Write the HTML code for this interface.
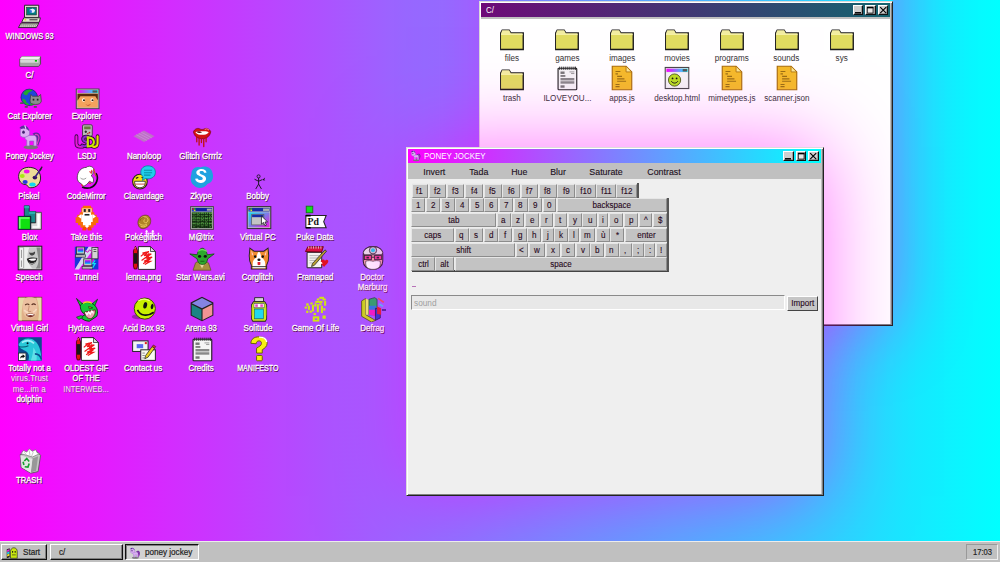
<!DOCTYPE html>
<html><head><meta charset="utf-8"><title>WINDOWS 93</title>
<style>
*{box-sizing:border-box;margin:0;padding:0}
html,body{width:1000px;height:562px;overflow:hidden}
body{font-family:"Liberation Sans",sans-serif;font-size:9px;position:relative;background:linear-gradient(90deg,#ff00ff 0%,#00ffff 100%);color:#222}
.dl{position:absolute;width:120px;height:11px;text-align:center;color:#fff;font-size:8.9px;line-height:11px;white-space:nowrap;text-shadow:.9px .9px 0 #505,.5px .5px .6px #636;-webkit-text-stroke:.3px #fff}
.dl span,.fl span,.k span,.mi span{display:inline-block}
.dl.fd{color:#f4dcf8;text-shadow:.8px .8px 0 #858;-webkit-text-stroke:0}
.fl{position:absolute;width:80px;height:11px;text-align:center;color:#333;font-size:8.9px;line-height:11px;white-space:nowrap}
.fl span{transform:scaleX(.91)}
.win{position:absolute;background:#c0c0c0}
.tb{position:absolute;color:#fff}
.tb .t{position:absolute;top:2px;font-size:9px;line-height:10px;transform:scaleX(.88);transform-origin:0 50%;white-space:nowrap}
.btn{position:absolute;width:10.5px;height:10.6px;background:#cfcfcf;border:1px solid;border-color:#fff #111 #111 #fff;box-shadow:inset -.7px -.7px 0 #888}
.btn svg{position:absolute;left:0;top:0;width:8.5px;height:8.6px}
.k{position:absolute;background:#c3c3c3;border:1px solid;border-color:#e6e6e6 #8c8c8c #8c8c8c #e6e6e6;text-align:center;font-size:8.3px;line-height:12.6px;color:#2a0a22;-webkit-text-stroke:.12px #2a0a22;white-space:nowrap;overflow:hidden}
.k span{transform:scaleX(.97)}
.mi{position:absolute;top:164px;height:16px;line-height:17px;text-align:center;font-size:9px;color:#201020;-webkit-text-stroke:.12px #201020;white-space:nowrap}
.mi span{transform:scaleX(.98)}
#bar{position:absolute;left:0;top:541px;width:1000px;height:21px;background:#c0c0c0;border-top:1px solid #ececec}
.tk{position:absolute;top:2px;height:16.4px;background:#c0c0c0;border:1px solid;border-color:#fff #111 #111 #fff;box-shadow:inset -1px -1px 0 #808080;font-size:9px;color:#222}
.tk.on{border-color:#111 #fff #fff #111;box-shadow:inset 1px 1px 0 #808080;background:#d2d2d2}
.tk i{position:absolute;top:2px;line-height:11px;font-style:normal;-webkit-text-stroke:.2px #222;transform:scaleX(.9);transform-origin:0 50%;white-space:nowrap}
</style></head><body>
<svg style="position:absolute;left:16.9px;top:3.9px" width="26" height="26" viewBox="0 0 32 32"><g transform="translate(.3,-1)">
<path d="M9 2.5h17.5v15H9z" fill="#e6e6da" stroke="#222" stroke-width="1.2"/>
<rect x="11.5" y="5" width="12" height="9.5" fill="#007c80" stroke="#333" stroke-width=".8"/>
<path d="M15 8l4-1.5 3 2-1 3-4 .5z" fill="#e8f0ff"/><path d="M15 8l3 1v3l-3-1z" fill="#3070e0"/>
<path d="M8 18h20.5l-1.5 5.5H5.5z" fill="#e2e2d4" stroke="#222" stroke-width="1.1"/>
<rect x="9" y="19.6" width="2" height="1.6" fill="#e0e000"/><rect x="15" y="19.8" width="10" height="1.3" fill="#333"/>
<path d="M4.5 24.5h22l-3 5.5H1.500z" fill="#d6d6c8" stroke="#222" stroke-width="1.1"/>
<path d="M5 26h19M4 28h19" stroke="#555" stroke-width="1" stroke-dasharray="1.5 1"/>
</g></svg>
<div class="dl" style="left:-30.8px;top:30.7px"><span style="transform:scaleX(0.84)">WINDOWS 93</span></div>
<svg style="position:absolute;left:16.9px;top:43.5px" width="26" height="26" viewBox="0 0 32 32"><path d="M3.5 18.500l2.5-3h23v9L26.5 27.500H3.500z" fill="#aaa" stroke="#444" stroke-width="1.1"/>
<path d="M3.5 18.500l2.5-3h23L26.5 18.500z" fill="#f0f0f0"/>
<path d="M4 19h22.500v4H4z" fill="#d6d6d6"/>
<path d="M4 23.500h22.500v3.500H4z" fill="#a4a4a4"/>
<rect x="22" y="19.7" width="2.6" height="2" fill="#0b0"/></svg>
<div class="dl" style="left:-30.8px;top:70.3px"><span style="transform:scaleX(0.9)">C/</span></div>
<svg style="position:absolute;left:16.9px;top:84.1px" width="26" height="26" viewBox="0 0 32 32"><g transform="translate(3,3.2) scale(.93,.88)">
<ellipse cx="13" cy="15" rx="11" ry="11.5" fill="#2046d8" stroke="#124" stroke-width=".8"/>
<path d="M5 9c3-5 9-6 12-4-2 3-5 2-6 5s-4 3-6-1zM4 17c3 0 5 2 5 5 2 1 5 3 3 4-4 0-8-4-8-9zM15 21c3-1 5 1 6 3-2 2-5 3-7 2z" fill="#22a82c"/>
<path d="M15 11l2.5 2.500h8L28 11l1 9c0 3-3 5-7.5 5S14 23 14 20z" fill="#8c8c8c" stroke="#333" stroke-width=".9"/>
<rect x="17.5" y="17" width="2.2" height="2.5" fill="#222"/><rect x="23" y="17" width="2.2" height="2.5" fill="#222"/>
<path d="M1 22h4v2.500H1zM7 27h4v2.500H7zM19 27h4v2.500h-4z" fill="#555"/>
</g></svg>
<div class="dl" style="left:-30.8px;top:110.9px"><span style="transform:scaleX(0.9)">Cat Explorer</span></div>
<svg style="position:absolute;left:16.9px;top:124.2px" width="26" height="26" viewBox="0 0 32 32"><ellipse cx="17" cy="28.5" rx="9" ry="2.6" fill="#777"/>
<path d="M19 12c4-3 9-2 10 3 1 4-2 8-3 12-2-2-1-6-2-9-1-3-3-4-5-6z" fill="#5a2c9c"/>
<path d="M22 13c3-1 5 1 5 4s-2 5-2 8" stroke="#e040c0" stroke-width="1.4" fill="none"/>
<path d="M10 14h11c2 0 3 2 3 4v9h-3.500v-6h-5v6H12v-7c-2-1-3-3-2-6z" fill="#dcaef4" stroke="#9060c0" stroke-width=".8"/>
<path d="M4 8c1-4 6-5 9-3s3 6 2 9l-4 2c-3 1-6 0-7-2z" fill="#dcaef4" stroke="#9060c0" stroke-width=".8"/>
<path d="M8 1l2 5M3 5c2-3 6-4 9-2 2 1 3 4 3 6-2-3-6-4-9-3z" fill="#5a2c9c"/>
<path d="M9.5 1.500l1.5 4.5" stroke="#f0d0ff" stroke-width="1.4"/>
<ellipse cx="8" cy="10" rx="1.6" ry="2" fill="#402070"/></svg>
<div class="dl" style="left:-30.8px;top:151.0px"><span style="transform:scaleX(0.87)">Poney Jockey</span></div>
<svg style="position:absolute;left:16.9px;top:164.6px" width="26" height="26" viewBox="0 0 32 32"><path d="M2 14C2 6 9 2 17 3s12 6 12 13-5 12-12 12c-5 0-3-4-7-4S2 20 2 14z" fill="#ecdc98" stroke="#222" stroke-width="1.2"/>
<ellipse cx="12" cy="8" rx="3.5" ry="2.4" fill="#f010f0"/>
<ellipse cx="6.5" cy="13.5" rx="3" ry="2.4" fill="#a8e810"/>
<ellipse cx="10" cy="21" rx="3.2" ry="2.5" fill="#2838e0"/>
<ellipse cx="19" cy="24" rx="4" ry="2.6" fill="#10d8f0"/>
<ellipse cx="22" cy="15.5" rx="2.8" ry="2.3" fill="#301060"/>
<path d="M22 15L30 4" stroke="#3a2080" stroke-width="2"/><path d="M28 7l3-5" stroke="#222" stroke-width="1.5"/></svg>
<div class="dl" style="left:-30.8px;top:191.4px"><span style="transform:scaleX(0.9)">Piskel</span></div>
<svg style="position:absolute;left:16.9px;top:204.8px" width="26" height="26" viewBox="0 0 32 32"><path d="M9 1h6v7h8v14h-6v-8h-8z" fill="#1a8a8a" stroke="#123" stroke-width="1"/>
<path d="M9 1h6v7h8v3h-8V4H9z" fill="#2ab0b0"/>
<path d="M23 9h7v21H17v-8h6z" fill="#d8d8d8" stroke="#333" stroke-width="1"/>
<path d="M25 11h3v17h-9v-2h6z" fill="#fff"/>
<rect x="1.5" y="14" width="15" height="16" fill="#10e010" stroke="#123" stroke-width="1.2"/>
<path d="M2.5 15h13v2h-11v12h-2z" fill="#70ff70"/></svg>
<div class="dl" style="left:-30.8px;top:231.6px"><span style="transform:scaleX(0.9)">Blox</span></div>
<svg style="position:absolute;left:16.9px;top:245.1px" width="26" height="26" viewBox="0 0 32 32"><rect x="1.5" y="1.5" width="29" height="29" fill="#d8d8d8" stroke="#222" stroke-width="1.3"/>
<rect x="3" y="3" width="5" height="26" fill="#f0f0f0" stroke="#888" stroke-width=".6"/>
<path d="M5.5 6v10M5.5 19v8" stroke="#999" stroke-width="1.2"/>
<rect x="9" y="3" width="20" height="26" fill="#c8c8c8"/>
<path d="M9 3h6c-2 6-3 12-1 18 1 4 3 6 5 8H9z" fill="#eee"/>
<path d="M24 3h5v26h-6c3-4 4-8 3-14z" fill="#888"/>
<path d="M15 9c2 1 5 1 7-1 1 2-1 5-3.5 5S15 11 15 9z" fill="#444"/>
<path d="M12 17c4-2 9-2 13-1-1 5-4 8-7 8s-5-3-6-7z" fill="#222"/>
<path d="M14 17.500c3-1 7-1 10-.500-1 2-3 2.5-5 2.500s-4-1-5-2z" fill="#fff"/>
<path d="M15 22c2 1.5 5 1.5 7-.500" stroke="#aaa" stroke-width="1.2" fill="none"/></svg>
<div class="dl" style="left:-30.8px;top:271.9px"><span style="transform:scaleX(0.9)">Speech</span></div>
<svg style="position:absolute;left:16.9px;top:295.7px" width="26" height="26" viewBox="0 0 32 32"><rect x="1.5" y="1.5" width="29" height="29" fill="#e0b088" stroke="#6a4a30" stroke-width="1"/>
<path d="M2 2h8c-3 6-5 14-4 28H2zM24 2h6v28h-4c2-10 1-20-2-28z" fill="#e8d8a8"/>
<path d="M9 3c4-2 10-2 14 0 3 6 3 16-1 22-3 3-9 3-12 0C6 19 6 9 9 3z" fill="#ecc0a0"/>
<path d="M10 11c2-1.5 4-1.5 5 0M18 11c1.5-1.5 3.5-1.5 5 0" stroke="#5a3020" stroke-width="1.4" fill="none"/>
<path d="M15 12c-.5 3-1 5-1.5 7h4" stroke="#c08868" stroke-width="1" fill="none"/>
<path d="M11 23c3-2 8-2 11 0-2 4-9 4-11 0z" fill="#7a3028"/>
<path d="M12.5 23.500c2.5-1 6-1 8 0" stroke="#fff" stroke-width="1.3" fill="none"/>
<path d="M9 17c1 2 3 3 5 3M24 16c-1 2-2 3-4 4" stroke="#f8d8c0" stroke-width="2" fill="none"/></svg>
<div class="dl" style="left:-30.8px;top:322.5px"><span style="transform:scaleX(0.9)">Virtual Girl</span></div>
<svg style="position:absolute;left:16.9px;top:336.2px" width="26" height="26" viewBox="0 0 32 32"><rect x="1.5" y="1.5" width="29" height="29" fill="#0c4c90"/>
<path d="M2 10C6 3 16 1 22 6c5 4 8 12 8 24H14c2-6 0-10-4-12s-7-3-8-8z" fill="#28c8d8"/>
<path d="M6 8c5-3 11-3 15 1" stroke="#a0f0f8" stroke-width="2" fill="none"/>
<path d="M2 13c4 1 8 1 12-1" stroke="#0a5870" stroke-width="1.3" fill="none"/>
<circle cx="13" cy="9" r="1.2" fill="#012"/>
<path d="M20 14c3 3 5 9 4 16h-7c2-5 3-11 3-16z" fill="#60e0e8"/>
<path d="M22 22c4 0 7 3 8 7" stroke="#0c4c90" stroke-width="2" fill="none"/>
<rect x="2" y="21" width="9" height="9" fill="#fff" stroke="#222" stroke-width=".9"/>
<path d="M4 28c0-3 1-4 3-4v-1.500l3 2.5-3 2.500V26c-1 0-2 .5-3 2z" fill="#111"/></svg>
<div class="dl" style="left:-30.8px;top:363.0px"><span style="transform:scaleX(0.9)">Totally not a</span></div>
<div class="dl fd" style="left:-30.8px;top:373.4px"><span style="transform:scaleX(0.9)">virus.Trust</span></div>
<div class="dl fd" style="left:-30.8px;top:383.8px"><span style="transform:scaleX(0.9)">me...im a</span></div>
<div class="dl" style="left:-30.8px;top:394.2px"><span style="transform:scaleX(0.9)">dolphin</span></div>
<svg style="position:absolute;left:16.9px;top:447.8px" width="26" height="26" viewBox="0 0 32 32"><path d="M4 8l20-4 5 5-3 20-9 2L5 24z" fill="#c4c4c4" stroke="#555" stroke-width="1"/>
<path d="M19 13l7-3-2.5 18-7 2z" fill="#989898"/>
<path d="M4 9l15 4.5-2 17L6 24z" fill="#e4e4e4"/>
<path d="M5 7l3-4 4 2 3-4 4 3 4-2 2 4 3 1-9 4z" fill="#fff" stroke="#777" stroke-width=".9"/>
<path d="M9 5l3 4M15 3l1 6M20 5l-2 5" stroke="#bbb" stroke-width="1"/>
<path d="M9 16l3-3 3 3.500M15 19l-1.5 4.5-4-.5M8.5 21l-1-4" stroke="#18a030" stroke-width="2" fill="none"/></svg>
<div class="dl" style="left:-30.8px;top:474.6px"><span style="transform:scaleX(0.86)">TRASH</span></div>
<svg style="position:absolute;left:74.1px;top:84.1px" width="26" height="26" viewBox="0 0 32 32"><g transform="translate(.8,4.3) scale(1,.9)">
<rect x="2" y="2" width="28" height="27" fill="#c0c0c0" stroke="#444" stroke-width="1.2"/>
<defs><linearGradient id="gmc"><stop offset="0" stop-color="#f0f"/><stop offset="1" stop-color="#0ff"/></linearGradient></defs>
<rect x="3.5" y="3.5" width="25" height="4" fill="url(#gmc)"/>
<rect x="22" y="4" width="6" height="3" fill="#555"/>
<rect x="3.5" y="8.5" width="25" height="19" fill="#f4a25c"/>
<path d="M3.5 8.500h25v9l-3-5.500H7l-3.5 6z" fill="#5a2a0e"/>
<ellipse cx="11" cy="17" rx="2" ry="2.4" fill="#fff"/><ellipse cx="21.5" cy="17" rx="2" ry="2.4" fill="#fff"/>
<circle cx="11.5" cy="17.3" r="1.3" fill="#321"/><circle cx="22" cy="17.3" r="1.3" fill="#321"/>
<path d="M13 22.500q3 3 7 0q-3 4.5-7 0z" fill="#a02020"/>
</g></svg>
<div class="dl" style="left:26.4px;top:110.9px"><span style="transform:scaleX(0.9)">Explorer</span></div>
<svg style="position:absolute;left:74.1px;top:124.2px" width="26" height="26" viewBox="0 0 32 32"><rect x="10.5" y="1" width="12" height="14" rx="1.5" fill="#bdbdbd" stroke="#333" stroke-width="1"/>
<rect x="12.5" y="3" width="8" height="3.5" fill="#6a7a40"/>
<path d="M13 9.500h3M14.5 8v3" stroke="#222" stroke-width="1.3"/><circle cx="19" cy="10.5" r="1.1" fill="#c02020"/><circle cx="17" cy="12" r="1" fill="#c02020"/>
<path d="M3 15v9c0 3 2 4 4.5 4h3" fill="none" stroke="#2a0a3a" stroke-width="4.6" stroke-linecap="round"/>
<path d="M17.5 16c-4-1.5-7 .5-6 3.500s6 2 5.5 5-4 3.5-7 2" fill="none" stroke="#2a0a3a" stroke-width="4.6" stroke-linecap="round"/>
<path d="M17 16.500v11c5.5 0 7.5-2.5 7.5-5.500s-2-5.5-7.5-5.500z" fill="none" stroke="#2a0a3a" stroke-width="4.6" stroke-linecap="round"/>
<path d="M29 15v9c0 3-2 4.5-5.5 4" fill="none" stroke="#2a0a3a" stroke-width="4.6" stroke-linecap="round"/>
<path d="M3 15v9c0 3 2 4 4.5 4h3" fill="none" stroke="#e818d8" stroke-width="2.6" stroke-linecap="round"/>
<path d="M17.5 16c-4-1.5-7 .5-6 3.500s6 2 5.5 5-4 3.5-7 2" fill="none" stroke="#8a28d0" stroke-width="2.6" stroke-linecap="round"/>
<path d="M17 16.500v11c5.5 0 7.5-2.5 7.5-5.500s-2-5.5-7.5-5.500z" fill="none" stroke="#c8e800" stroke-width="2.6" stroke-linecap="round"/>
<path d="M29 15v9c0 3-2 4.5-5.5 4" fill="none" stroke="#e8e000" stroke-width="2.6" stroke-linecap="round"/></svg>
<div class="dl" style="left:26.4px;top:151.0px"><span style="transform:scaleX(0.86)">LSDJ</span></div>
<svg style="position:absolute;left:74.1px;top:164.6px" width="26" height="26" viewBox="0 0 32 32"><path d="M27 10c4 6 1 15-7 18-4 1-8 0-10-1" fill="none" stroke="#111" stroke-width="2"/>
<path d="M4 16C4 8 9 3 15 3c2-2 6-2 8 0 2 1 2 4 0 5 1 2 0 4-2 5 3 2 4 6 2 9l-4-2c-2 3-5 6-8 6l-2-3c-3-1-5-4-5-7z" fill="#fff" stroke="#333" stroke-width=".9"/>
<path d="M19 8l3 2M22 6l-1 5" stroke="#e03030" stroke-width="1.3"/>
<path d="M24 5l3 9" stroke="#c06020" stroke-width="1.6"/>
<path d="M9 24l2 2M18 22l3 1" stroke="#e03030" stroke-width="1.5"/>
<path d="M8 16c2 2 5 2 7 0" stroke="#888" stroke-width="1" fill="none"/></svg>
<div class="dl" style="left:26.4px;top:191.4px"><span style="transform:scaleX(0.88)">CodeMirror</span></div>
<svg style="position:absolute;left:74.1px;top:204.8px" width="26" height="26" viewBox="0 0 32 32"><path d="M11 1h10v2h2v6h2v3h3v3h2v7h-3v3h-3v3h-3v3h-4v-2h-2v2H11v-3H8v-3H5v-3H2v-7h2v-3h3V9h2V3h2z" fill="#f86c08"/>
<path d="M11 9h10v3h2v9h-2v4h-3v3h-4v-3h-3v-4H9v-9h2z" fill="#fff"/>
<path d="M10 4h12v5H10z" fill="#ffc890"/>
<rect x="12" y="5" width="2.5" height="3.5" fill="#222"/><rect x="17.5" y="5" width="2.5" height="3.5" fill="#222"/>
<path d="M13 11h6v2h-6z" fill="#222"/>
<path d="M5 14l4-3v6zM27 14l-4-3v6z" fill="#fff"/>
<path d="M11 27h4v4h-5zM17 27h4l1 4h-5z" fill="#f84800"/></svg>
<div class="dl" style="left:26.4px;top:231.6px"><span style="transform:scaleX(0.9)">Take this</span></div>
<svg style="position:absolute;left:74.1px;top:245.1px" width="26" height="26" viewBox="0 0 32 32"><path d="M1 2h17L1 30z" fill="#1838d8"/><path d="M19 30L30 8v22z" fill="#1838d8"/>
<path d="M18 2L1 30h5L26 2z" fill="#d0d8f0"/>
<rect x="3" y="2.5" width="10" height="8.5" fill="#c8c8c8" stroke="#333" stroke-width="1"/>
<defs><linearGradient id="gtn" x1="0" y1="0" x2="0" y2="1"><stop offset="0" stop-color="#f020e0"/><stop offset=".5" stop-color="#4040ff"/><stop offset="1" stop-color="#10e0f0"/></linearGradient></defs>
<rect x="4.5" y="4" width="7" height="5" fill="url(#gtn)"/>
<rect x="2" y="12" width="12" height="3" fill="#bbb" stroke="#333" stroke-width=".8"/>
<rect x="12" y="17" width="10" height="8.5" fill="#c8c8c8" stroke="#333" stroke-width="1"/>
<rect x="13.5" y="18.5" width="7" height="5" fill="url(#gtn)"/>
<rect x="10" y="26.5" width="13" height="3" fill="#bbb" stroke="#333" stroke-width=".8"/>
<rect x="22" y="3" width="7.5" height="14" fill="#d4d4d4" stroke="#333" stroke-width="1"/>
<path d="M24 5.500h3.500M24 8h3.5" stroke="#555" stroke-width="1.2"/>
<path d="M14 7l3 2 2-3 3 2" stroke="#e010c0" stroke-width="1.2" fill="none"/>
<path d="M26 19l-3 4h3l-3 5" stroke="#10e0f0" stroke-width="1.6" fill="none"/></svg>
<div class="dl" style="left:26.4px;top:271.9px"><span style="transform:scaleX(0.9)">Tunnel</span></div>
<svg style="position:absolute;left:74.1px;top:295.7px" width="26" height="26" viewBox="0 0 32 32"><path d="M3 3l8 7-3 3zM29 4l-7 6 3 3z" fill="#18c838" stroke="#0a3c12" stroke-width="1"/>
<path d="M8 11c3-4 13-4 17 0 4 4 5 9 3 14l-9 6c-4 0-9-2-11-5l6-3c-4-2-7-7-6-12z" fill="#18c838" stroke="#0a3c12" stroke-width="1.2"/>
<path d="M11 9c3-2 8-2 11 0" stroke="#e8e020" stroke-width="1.8" fill="none"/>
<path d="M13 20l13-3c1 4-1 8-5 11-4 0-7-2-8-8z" fill="#f0a0b0" stroke="#601020" stroke-width="1"/>
<path d="M14 20l2 3 2-3.5 2 3 2-4 2 3" stroke="#fff" stroke-width="1.5" fill="none"/>
<path d="M18 13l5 1.5-4 1.500z" fill="#e8e020" stroke="#111" stroke-width=".8"/>
<path d="M3 26l6-2 2 2-5 3z" fill="#18c838" stroke="#0a3c12" stroke-width=".8"/></svg>
<div class="dl" style="left:26.4px;top:322.5px"><span style="transform:scaleX(0.9)">Hydra.exe</span></div>
<svg style="position:absolute;left:74.1px;top:336.2px" width="26" height="26" viewBox="0 0 32 32"><path d="M9 2h15l6 6v22H9z" fill="#fff" stroke="#222" stroke-width="1.2"/>
<path d="M24 2v6h6z" fill="#ddd" stroke="#222" stroke-width=".9"/>
<path d="M14 10l8-2-6 5 9-2-8 5 9-1-10 5 8 0-7 4M12 14l6-5M13 19l11-8M15 23l9-6M18 9l2 8M22 10l-2 12" stroke="#f01818" stroke-width="1.5" fill="none"/>
<path d="M3 7l2.5-5.500L8 7v19l-1 3.500H4L3 26z" fill="#e01010" stroke="#400" stroke-width="1"/>
<rect x="3.5" y="10" width="4" height="13" fill="#181818"/>
<path d="M4.5 5l1-2.5" stroke="#ff9090" stroke-width="1"/></svg>
<div class="dl" style="left:26.4px;top:363.0px"><span style="transform:scaleX(0.84)">OLDEST GIF</span></div>
<div class="dl" style="left:26.4px;top:373.4px"><span style="transform:scaleX(0.84)">OF THE</span></div>
<div class="dl fd" style="left:26.4px;top:383.8px"><span style="transform:scaleX(0.84)">INTERWEB...</span></div>
<svg style="position:absolute;left:131.3px;top:124.2px" width="26" height="26" viewBox="0 0 32 32"><g opacity=".75"><path d="M16 8l13 7-13 7L3 15z" fill="#b48cb4"/>
<path d="M9.5 11.500l13 7M12.5 10l13 7M6.5 13.200l13 7" stroke="#c8a8cc" stroke-width="1.1"/></g></svg>
<div class="dl" style="left:83.6px;top:151.0px"><span style="transform:scaleX(0.9)">Nanoloop</span></div>
<svg style="position:absolute;left:131.3px;top:164.6px" width="26" height="26" viewBox="0 0 32 32"><circle cx="11" cy="20.5" r="9" fill="#f4e010" stroke="#222" stroke-width="1.3"/>
<path d="M4.5 20h13v2c0 4-3 6-6.5 6S4.5 26 4.5 22z" fill="#fff" stroke="#222" stroke-width="1"/>
<path d="M5 23.500h12" stroke="#c02020" stroke-width="1"/>
<path d="M6 16.500l3-1.500M13 15l3 1.5" stroke="#222" stroke-width="1.5"/>
<path d="M12 9c0-5 4-8 9-8s9 3 9 8-4 8-9 8c-1 0-2 0-3-.5L14 19l1-4.500C13 13 12 11 12 9z" fill="#20d0ec" stroke="#0a8098" stroke-width="1"/>
<path d="M16 6.500h10M16 9.500h10M16 12.500h8" stroke="#0a90a8" stroke-width="1.4"/></svg>
<div class="dl" style="left:83.6px;top:191.4px"><span style="transform:scaleX(0.88)">Clavardage</span></div>
<svg style="position:absolute;left:131.3px;top:204.8px" width="26" height="26" viewBox="0 0 32 32"><g transform="translate(4,9) scale(.78,.8)">
<path d="M7 11c2-5 9-8 14-6 5 2 6 8 4 13-2 4-8 8-13 7S4 17 7 11z" fill="#b08428" stroke="#5a3c0c" stroke-width="1"/>
<path d="M11 9c3-3 8-3 10 0s0 7-3 7-4-4-1-5M8 17c3 3 8 4 12 1M10 21c3 2 7 2 10-1" fill="none" stroke="#ecc860" stroke-width="1.5"/>
<path d="M9 13c1-3 3-5 6-5" stroke="#7a5414" stroke-width="1.3" fill="none"/>
</g></svg>
<div class="dl" style="left:83.6px;top:231.6px"><span style="transform:scaleX(0.9)">Pokéglitch</span></div>
<svg style="position:absolute;left:131.3px;top:245.1px" width="26" height="26" viewBox="0 0 32 32"><path d="M9 2h15l6 6v22H9z" fill="#fff" stroke="#222" stroke-width="1.2"/>
<path d="M24 2v6h6z" fill="#ddd" stroke="#222" stroke-width=".9"/>
<path d="M14 10l8-2-6 5 9-2-8 5 9-1-10 5 8 0-7 4M12 14l6-5M13 19l11-8M15 23l9-6M18 9l2 8M22 10l-2 12" stroke="#f01818" stroke-width="1.5" fill="none"/>
<path d="M3 7l2.5-5.500L8 7v19l-1 3.500H4L3 26z" fill="#e01010" stroke="#400" stroke-width="1"/>
<rect x="3.5" y="10" width="4" height="13" fill="#181818"/>
<path d="M4.5 5l1-2.5" stroke="#ff9090" stroke-width="1"/></svg>
<div class="dl" style="left:83.6px;top:271.9px"><span style="transform:scaleX(0.9)">lenna.png</span></div>
<svg style="position:absolute;left:131.3px;top:295.7px" width="26" height="26" viewBox="0 0 32 32"><ellipse cx="9" cy="25.5" rx="8" ry="3" fill="#802090" opacity=".7"/>
<circle cx="17" cy="15.5" r="13" fill="#c8f000" stroke="#3a4a00" stroke-width="1.2"/>
<path d="M9 6c4-3 10-3 14 0" stroke="#f0ff80" stroke-width="1.5" fill="none"/>
<ellipse cx="17.5" cy="11.5" rx="2.3" ry="4" fill="#111" transform="rotate(12 17.5 11.5)"/>
<ellipse cx="26" cy="13" rx="1.7" ry="3.5" fill="#111" transform="rotate(12 26 13)"/>
<path d="M8 17c3 7 12 9 20 3" stroke="#111" stroke-width="2" fill="none"/></svg>
<div class="dl" style="left:83.6px;top:322.5px"><span style="transform:scaleX(0.88)">Acid Box 93</span></div>
<svg style="position:absolute;left:131.3px;top:336.2px" width="26" height="26" viewBox="0 0 32 32"><rect x="2" y="6" width="19" height="13" fill="#f4f4f4" stroke="#222" stroke-width="1.2"/>
<rect x="7" y="10" width="8" height="5" fill="#5868f0"/>
<rect x="17" y="7.5" width="2.5" height="2.5" fill="#e02020"/>
<rect x="12" y="17" width="18" height="13" fill="#f8f8f0" stroke="#222" stroke-width="1.2"/>
<path d="M14 21h3M14 24h3M14 27h3" stroke="#888" stroke-width="1.2"/>
<path d="M26 13l3 2-8 11-4 2 1-4z" fill="#e8d020" stroke="#222" stroke-width=".9"/>
<path d="M26 13l1.5-2 3 2-1.5 2z" fill="#e03030" stroke="#222" stroke-width=".7"/></svg>
<div class="dl" style="left:83.6px;top:363.0px"><span style="transform:scaleX(0.9)">Contact us</span></div>
<svg style="position:absolute;left:188.5px;top:124.2px" width="26" height="26" viewBox="0 0 32 32"><g transform="translate(3,1) scale(.82,.95)">
<path d="M3 9c2-4 6-5 9-4 2 1 3 1 4 1s2 0 4-1c3-1 7 0 9 4-1 5-5 9-13 9S4 14 3 9z" fill="#d41414" stroke="#600" stroke-width=".8"/>
<path d="M6 9.500c4-2 8-1 10-1s6-1 10 1c-3 3-6 3.5-10 3.500S9 12.5 6 9.500z" fill="#fff"/>
<path d="M7 9c3-1 6-1 9 1-3 1-6 1-9-1z" fill="#5a0a0a"/>
<path d="M8 16v6M11.5 17v9M15 18v5M18.5 18v10M22 17v5" stroke="#c01010" stroke-width="2" stroke-linecap="round"/>
<path d="M20 6c2-1 5-.5 6 1" stroke="#ff9090" stroke-width="1.3" fill="none"/>
</g></svg>
<div class="dl" style="left:140.8px;top:151.0px"><span style="transform:scaleX(0.9)">Glitch Grrrlz</span></div>
<svg style="position:absolute;left:188.5px;top:164.6px" width="26" height="26" viewBox="0 0 32 32"><path d="M3 11C3 5 8 1 14 3c6-3 14 0 15 7 2 6-1 12-6 13-4 6-13 7-17 2-4-3-5-9-3-14z" fill="#1ea2e0"/>
<path d="M10.5 9.500c0-3 3-4.5 6-4.500s6.5 1.5 6.5 4.500c0 4-8 4-8 7 0 1.5 1.5 2 3 2s3-.5 3.5-2l3 .500c-.5 3.5-3.5 5-6.5 5s-7-1.5-7-5.500c0-4.5 8-4 8-7.5 0-1-1-1.5-2.5-1.500s-2.5.5-3 2z" fill="#fff" transform="translate(32,0) scale(-1,1)"/></svg>
<div class="dl" style="left:140.8px;top:191.4px"><span style="transform:scaleX(0.9)">Zkype</span></div>
<svg style="position:absolute;left:188.5px;top:204.8px" width="26" height="26" viewBox="0 0 32 32"><rect x="2" y="2" width="28" height="28" fill="#c0c0c0" stroke="#444" stroke-width="1.2"/>
<rect x="3.5" y="3.5" width="25" height="4.5" fill="#1020a0"/>
<rect x="4" y="4" width="2" height="2" fill="#e02020"/><rect x="6" y="4" width="2" height="2" fill="#20c020"/><rect x="4" y="6" width="2" height="1.5" fill="#2040e0"/><rect x="6" y="6" width="2" height="1.5" fill="#e0e020"/>
<rect x="22" y="4.5" width="6" height="2.5" fill="#aaa"/>
<rect x="3.5" y="9" width="25" height="19.5" fill="#0c200c"/>
<path d="M5 9v19M7.5 9v19M10 9v19M12.5 9v19M15 9v19M17.5 9v19M20 9v19M22.5 9v19M25 9v19M27.5 9v19" stroke="#58b048" stroke-width="1.3" stroke-dasharray="2.5 1.2 1 1.5"/>
<path d="M6.2 10v18M11.2 11v17M16.2 9v19M21.2 12v16M26.2 10v18" stroke="#8cd070" stroke-width=".8" stroke-dasharray="1.5 2.5"/></svg>
<div class="dl" style="left:140.8px;top:231.6px"><span style="transform:scaleX(0.88)">M@trix</span></div>
<svg style="position:absolute;left:188.5px;top:245.1px" width="26" height="26" viewBox="0 0 32 32"><path d="M8 22c0-2 16-2 16 0l3 9H5z" fill="#a89040" stroke="#5a4a1a" stroke-width=".8"/>
<path d="M13 23l3 6 3-6z" fill="#e8d8a0"/>
<path d="M1 11l9 1c1-5 4-8 6.5-8s5 3 6 8l8.5-1-8 6c-1 5-3 7-6.5 7S11 22 10 17z" fill="#2ca82c" stroke="#145014" stroke-width="1"/>
<path d="M11 8c2-3 8-3 11 0" stroke="#70e060" stroke-width="1.5" fill="none"/>
<ellipse cx="13" cy="14" rx="2" ry="1.6" fill="#111"/><ellipse cx="20" cy="14" rx="2" ry="1.6" fill="#111"/>
<path d="M14 20h5" stroke="#145014" stroke-width="1"/></svg>
<div class="dl" style="left:140.8px;top:271.9px"><span style="transform:scaleX(0.92)">Star Wars.avi</span></div>
<svg style="position:absolute;left:188.5px;top:295.7px" width="26" height="26" viewBox="0 0 32 32"><path d="M16 1l14 7v16l-14 7L2 24V8z" fill="#222"/>
<path d="M16 2.500L28.5 8.8 16 15 3.5 8.800z" fill="#8484e4"/>
<path d="M3.3 10.500l12 6v13l-12-6z" fill="#1c8484"/>
<path d="M28.7 10.500l-12 6v13l12-6z" fill="#f49494"/></svg>
<div class="dl" style="left:140.8px;top:322.5px"><span style="transform:scaleX(0.88)">Arena 93</span></div>
<svg style="position:absolute;left:188.5px;top:336.2px" width="26" height="26" viewBox="0 0 32 32"><rect x="5" y="4" width="23" height="26.5" rx="1" fill="#f4f4f4" stroke="#222" stroke-width="1.4"/>
<path d="M7 2v4M9.5 2v4M12 2v4M14.5 2v4M17 2v4M19.5 2v4M22 2v4M24.5 2v4M26.5 2v4" stroke="#222" stroke-width="1.1"/>
<rect x="8" y="8" width="5" height="3" fill="#777"/><path d="M19 8.500h6M21 10.500h4" stroke="#888" stroke-width="1"/>
<path d="M8 13.500h6" stroke="#333" stroke-width="1.4"/>
<rect x="8" y="16" width="17" height="3" fill="#888"/><rect x="8" y="20" width="17" height="3" fill="#888"/>
<rect x="8" y="25" width="5" height="3" fill="#777"/></svg>
<div class="dl" style="left:140.8px;top:363.0px"><span style="transform:scaleX(0.9)">Credits</span></div>
<svg style="position:absolute;left:245.7px;top:164.6px" width="26" height="26" viewBox="0 0 32 32"><circle cx="15.5" cy="14" r="1.9" fill="none" stroke="#111" stroke-width="1"/>
<path d="M15.5 16v7.500M15.5 23.500l-3.5 6M15.5 23.500l3.5 6M10.5 17.500l5 2.5 4.5-2" stroke="#111" stroke-width="1.1" fill="none"/>
<path d="M20 18.500l3.5-3-1 3 1.5 1z" fill="#111"/></svg>
<div class="dl" style="left:198.0px;top:191.4px"><span style="transform:scaleX(0.9)">Bobby</span></div>
<svg style="position:absolute;left:245.7px;top:204.8px" width="26" height="26" viewBox="0 0 32 32"><rect x="1.5" y="2" width="29" height="27" fill="#c8c8c8" stroke="#333" stroke-width="1.3"/>
<rect x="3" y="3.5" width="26" height="4.5" fill="#1828a8"/>
<rect x="3.5" y="4" width="2" height="1.8" fill="#e02020"/><rect x="5.5" y="4" width="2" height="1.8" fill="#20c020"/><rect x="3.5" y="5.8" width="2" height="1.7" fill="#2060f0"/><rect x="5.5" y="5.8" width="2" height="1.7" fill="#e0e020"/>
<rect x="21" y="4.3" width="7.5" height="3" fill="#b0b0b0"/>
<defs><linearGradient id="gvp" x1="0" y1="0" x2="1" y2="1"><stop offset="0" stop-color="#10e0f0"/><stop offset="1" stop-color="#f010e0"/></linearGradient></defs>
<rect x="3" y="9" width="26" height="18.5" fill="url(#gvp)"/>
<rect x="7" y="11.5" width="15" height="13" fill="#c4c4c4" stroke="#555" stroke-width=".8"/>
<rect x="7.5" y="12" width="14" height="3" fill="#1828a8"/>
<path d="M19 13.500v10l2.5-2 1.8 4 1.8-.8-1.8-3.8 3.2-.2z" fill="#fff" stroke="#111" stroke-width=".9"/></svg>
<div class="dl" style="left:198.0px;top:231.6px"><span style="transform:scaleX(0.9)">Virtual PC</span></div>
<svg style="position:absolute;left:245.7px;top:245.1px" width="26" height="26" viewBox="0 0 32 32"><g transform="translate(2.2,1) scale(.86,.95)">
<path d="M3 3l6 4h14l6-4 1 10c0 4-1 9-3 12v5H5v-5C3 22 2 17 2 13z" fill="#f08c30" stroke="#222" stroke-width="1.3"/>
<path d="M5 6l3 5-2 2zM27 6l-3 5 2 2z" fill="#ffc8c0"/>
<path d="M16 8c2 0 3 4 3 7 3 1 6 4 6 8v6H7v-6c0-4 3-7 6-8 0-3 1-7 3-7z" fill="#fff"/>
<circle cx="10.5" cy="14" r="1.7" fill="#111"/><circle cx="21.5" cy="14" r="1.7" fill="#111"/>
<ellipse cx="16" cy="18" rx="2.2" ry="1.6" fill="#111"/>
<path d="M14 21h4v3c0 1.5-4 1.5-4 0z" fill="#e02030"/>
<path d="M5 27h22" stroke="#222" stroke-width="1.2"/>
</g></svg>
<div class="dl" style="left:198.0px;top:271.9px"><span style="transform:scaleX(0.9)">Corglitch</span></div>
<svg style="position:absolute;left:245.7px;top:295.7px" width="26" height="26" viewBox="0 0 32 32"><g transform="translate(3.6,0) scale(.78,1)">
<path d="M9 2h14v5H9z" fill="#d8d8d8" stroke="#222" stroke-width="1.2"/>
<path d="M7 7h18l3 4v17l-2 3H6l-2-3V11z" fill="#d0e820" stroke="#222" stroke-width="1.3"/>
<rect x="8" y="9" width="16" height="5.5" fill="#fff" stroke="#444" stroke-width=".8"/>
<rect x="10" y="10.3" width="4" height="3" fill="#f040c0"/><rect x="18" y="10.3" width="4" height="3" fill="#f040c0"/>
<rect x="9" y="16" width="14" height="12" fill="#20d8f0" stroke="#186878" stroke-width="1"/>
<path d="M4.5 14v10M27.5 14v10" stroke="#7a8a10" stroke-width="1.2"/>
</g></svg>
<div class="dl" style="left:198.0px;top:322.5px"><span style="transform:scaleX(0.9)">Solitude</span></div>
<svg style="position:absolute;left:245.7px;top:336.2px" width="26" height="26" viewBox="0 0 32 32"><path d="M6 9c0-5 4-8 10-8s10 3 10 8c0 4-3 6-6 8v4h-7v-6c3-2 6-3 6-6 0-2-1-3-3-3s-3 1-3.5 3.500z" fill="#f8f010" stroke="#6a6000" stroke-width="1.2"/>
<rect x="13" y="24" width="7" height="6.5" rx="1" fill="#f8f010" stroke="#6a6000" stroke-width="1.2"/>
<path d="M16 1.500c5 0 9 2 9.5 6" stroke="#fff" stroke-width="1.6" fill="none"/></svg>
<div class="dl" style="left:198.0px;top:363.0px"><span style="transform:scaleX(0.8)">MANIFESTO</span></div>
<svg style="position:absolute;left:302.9px;top:204.8px" width="26" height="26" viewBox="0 0 32 32"><rect x="4" y="1.5" width="8" height="8" fill="#10e020" stroke="#1a7a1a" stroke-width="1.2"/>
<path d="M3.5 13h25l-3 7.5 3 7.500h-25z" fill="#fff" stroke="#222" stroke-width="1.3"/>
<path d="M3.5 13h6M3.5 28h6" stroke="#000" stroke-width="2"/>
<text x="5.5" y="25" font-family="Liberation Serif" font-weight="bold" font-size="12" fill="#111">Pd</text></svg>
<div class="dl" style="left:255.2px;top:231.6px"><span style="transform:scaleX(0.9)">Puke Data</span></div>
<svg style="position:absolute;left:302.9px;top:245.1px" width="26" height="26" viewBox="0 0 32 32"><path d="M5 9h18v19H5z" fill="#f4f4f0" stroke="#222" stroke-width="1.2"/>
<path d="M3 8l3-6h19l-2 6.500z" fill="#d81040" stroke="#600" stroke-width="1"/>
<path d="M7 1.500v3M10 1.500v3M13 1.500v3M16 1.500v3M19 1.500v3M22 1.500v3" stroke="#ddd" stroke-width="1"/>
<path d="M8 13h12M8 16h12M8 19h10M8 22h8" stroke="#aaa" stroke-width="1"/>
<path d="M27 6l2 1.500L14 25l-3.5 1.500L11.5 23z" fill="#b8a030" stroke="#222" stroke-width=".9"/>
<path d="M22 20c1-3 5-3 5 0 1-3 5-2 4 1s-4 4-5 6c-2-2-5-4-4-7z" fill="#e01020"/>
<path d="M20 21c2-1 4 0 4 2h-5z" fill="#fff"/></svg>
<div class="dl" style="left:255.2px;top:271.9px"><span style="transform:scaleX(0.9)">Framapad</span></div>
<svg style="position:absolute;left:302.9px;top:295.7px" width="26" height="26" viewBox="0 0 32 32"><g fill="#d0e810">
<rect x="20" y="1" width="6" height="2.5"/><rect x="24" y="3" width="4" height="2.5"/><rect x="17" y="3" width="3" height="2.5"/>
<rect x="15" y="6" width="9" height="2.5"/><rect x="26" y="6" width="2.5" height="6"/><rect x="4" y="9" width="3" height="3"/>
<rect x="9" y="8" width="3" height="2.5"/><rect x="6" y="12" width="2.5" height="5"/><rect x="2" y="13" width="3" height="2.5"/>
<rect x="11" y="11" width="2.5" height="8"/><rect x="14" y="9" width="2.5" height="4"/><rect x="17" y="10" width="2.5" height="10"/>
<rect x="20" y="9" width="3" height="2.5"/><rect x="22" y="12" width="2.5" height="9"/><rect x="8" y="18" width="3" height="2.5"/>
<rect x="4" y="18" width="2.5" height="3"/><rect x="13" y="21" width="3" height="2.5"/><rect x="25" y="15" width="2.5" height="3"/>
<rect x="12" y="25" width="8" height="2.5"/><rect x="12" y="27" width="2.5" height="3"/><rect x="17.5" y="27" width="2.5" height="3"/><rect x="12" y="29.5" width="8" height="2"/>
<rect x="24" y="24" width="4" height="4"/>
</g></svg>
<div class="dl" style="left:255.2px;top:322.5px"><span style="transform:scaleX(0.9)">Game Of Life</span></div>
<svg style="position:absolute;left:360.1px;top:245.1px" width="26" height="26" viewBox="0 0 32 32"><path d="M4 12C4 5 9 2 16 2s12 3 12 10v8c0 6-5 10-12 10S4 26 4 20z" fill="#f0a8a0" stroke="#222" stroke-width="1.3"/>
<path d="M4 9c2-5 7-7 12-7s10 2 12 7l-1 3H5z" fill="#e8e8e8" stroke="#222" stroke-width="1"/>
<circle cx="16" cy="6.5" r="4.5" fill="#d0d0d0" stroke="#222" stroke-width="1"/><circle cx="16" cy="6.5" r="2.5" fill="#20d0e8"/>
<rect x="5.5" y="13" width="8.5" height="5" fill="#f04090" stroke="#222" stroke-width="1"/><rect x="18" y="13" width="8.5" height="5" fill="#f04090" stroke="#222" stroke-width="1"/>
<path d="M14 15h4" stroke="#222" stroke-width="1.2"/>
<rect x="8" y="14.5" width="3" height="2" fill="#222"/><rect x="20.5" y="14.5" width="3" height="2" fill="#222"/>
<path d="M7 20c3-1 6-1 9 0 3-1 6-1 9 0v3c0 5-4 7-9 7s-9-2-9-7z" fill="#fff" stroke="#444" stroke-width=".9"/></svg>
<div class="dl" style="left:312.4px;top:271.9px"><span style="transform:scaleX(0.9)">Doctor</span></div>
<div class="dl" style="left:312.4px;top:282.3px"><span style="transform:scaleX(0.9)">Marburg</span></div>
<svg style="position:absolute;left:360.1px;top:295.7px" width="26" height="26" viewBox="0 0 32 32"><path d="M2 6l5-3v20l12 7-5 2L2 25z" fill="#c8e010" stroke="#4a5a00" stroke-width="1"/>
<path d="M7 3l4 2v18l-4 0z" fill="#e8f860"/>
<path d="M11 4l7-2 3 2v16l-10 3z" fill="#20b060" stroke="#0a4020" stroke-width=".8"/>
<path d="M11 12h9v12l-9 0z" fill="#2080e0"/>
<path d="M11 17h8v8l-8-2z" fill="#f020c0"/>
<path d="M19 15l6 2v10l-6 3z" fill="#2838c8" stroke="#112" stroke-width=".8"/>
<path d="M21 13l5 2v8l-5-1z" fill="#e02020"/>
<path d="M23 2l7 5-1.5 1.5-7-5z" fill="#f05050"/>
<path d="M24 9l5 3-1 1.5-5-3z" fill="#40d0f0"/>
<path d="M27 16h5v2.500h-5z" fill="#402890"/></svg>
<div class="dl" style="left:312.4px;top:322.5px"><span style="transform:scaleX(0.9)">Defrag</span></div>
<svg style="position:absolute;left:143.5px;top:230px" width="12" height="8" viewBox="0 0 12 8"><g stroke="#fff" stroke-width=".9" fill="none"><circle cx="2.6" cy="1.3" r=".8" fill="#fff"/><path d="M2.6 2v3M2.6 5l-1.3 2.500M2.6 5l1.3 2.500M.8 3.200h3.6"/><circle cx="8.8" cy="1.3" r=".8" fill="#fff"/><path d="M8.8 2v3M8.8 5l-1.3 2.500M8.8 5l1.3 2.500M7 3.200h3.6"/></g></svg>

<!-- C/ window -->
<div style="position:absolute;left:478.6px;top:-200px;width:414.6px;height:526px;box-shadow:0 0 70px rgba(255,0,255,.46)"></div>
<div class="win" style="left:478.6px;top:1px;width:414.6px;height:325px;border:1px solid;border-color:#d8d8d8 #222 #222 #d8d8d8;box-shadow:inset 1px 1px 0 #fff,inset -1px -1px 0 #808080"></div>
<div class="tb" style="left:481px;top:3px;width:409.4px;height:14px;background:linear-gradient(90deg,#6e0a78,#14646f)"><div class="t" style="left:5px">C/</div>
 <div class="btn" style="left:371.8px;top:1.6px"><svg viewBox="0 0 8.5 8.6"><path d="M1 6.800h6" stroke="#000" stroke-width="1.5"/></svg></div><div class="btn" style="left:384px;top:1.6px"><svg viewBox="0 0 8.5 8.6"><path d="M1.3 1.300h5.800v5.800h-5.800z" fill="#e8e8e8" stroke="#000" stroke-width=".8"/><path d="M1 1.600h6.4" stroke="#000" stroke-width="1.5"/></svg></div><div class="btn" style="left:396.5px;top:1.6px"><svg viewBox="0 0 8.5 8.6"><path d="M1.2 1.200l6 6M7.2 1.200l-6 6" stroke="#000" stroke-width="1.1"/></svg></div>
</div>
<div style="position:absolute;left:481px;top:19px;width:409.4px;height:305px;background:#fff"></div>
<svg style="position:absolute;left:499.3px;top:25.2px" width="26" height="26" viewBox="0 0 32 32"><path d="M1.3 9.500l2.2-4h9.500l2 3.500h15.700v22H1.300z" fill="#1c1c1c"/>
<path d="M2.5 10l1.5-3.500h8.500l2 3.500h14.500v2.500h-26.500z" fill="#f2eea0"/>
<path d="M2.5 11.500h26.500v17.700H2.500z" fill="#e0dc60"/>
<path d="M2.5 11.700h26.5" stroke="#f8f4b0" stroke-width="1"/></svg>
<div class="fl" style="left:472.3px;top:52.8px"><span>files</span></div>
<svg style="position:absolute;left:554.2px;top:25.2px" width="26" height="26" viewBox="0 0 32 32"><path d="M1.3 9.500l2.2-4h9.500l2 3.500h15.700v22H1.300z" fill="#1c1c1c"/>
<path d="M2.5 10l1.5-3.500h8.500l2 3.500h14.500v2.500h-26.500z" fill="#f2eea0"/>
<path d="M2.5 11.500h26.500v17.700H2.500z" fill="#e0dc60"/>
<path d="M2.5 11.700h26.5" stroke="#f8f4b0" stroke-width="1"/></svg>
<div class="fl" style="left:527.2px;top:52.8px"><span>games</span></div>
<svg style="position:absolute;left:609.1px;top:25.2px" width="26" height="26" viewBox="0 0 32 32"><path d="M1.3 9.500l2.2-4h9.500l2 3.500h15.700v22H1.300z" fill="#1c1c1c"/>
<path d="M2.5 10l1.5-3.500h8.500l2 3.500h14.500v2.500h-26.500z" fill="#f2eea0"/>
<path d="M2.5 11.500h26.500v17.700H2.500z" fill="#e0dc60"/>
<path d="M2.5 11.700h26.5" stroke="#f8f4b0" stroke-width="1"/></svg>
<div class="fl" style="left:582.1px;top:52.8px"><span>images</span></div>
<svg style="position:absolute;left:664.0px;top:25.2px" width="26" height="26" viewBox="0 0 32 32"><path d="M1.3 9.500l2.2-4h9.500l2 3.500h15.700v22H1.300z" fill="#1c1c1c"/>
<path d="M2.5 10l1.5-3.500h8.500l2 3.500h14.500v2.500h-26.500z" fill="#f2eea0"/>
<path d="M2.5 11.500h26.500v17.700H2.500z" fill="#e0dc60"/>
<path d="M2.5 11.700h26.5" stroke="#f8f4b0" stroke-width="1"/></svg>
<div class="fl" style="left:637.0px;top:52.8px"><span>movies</span></div>
<svg style="position:absolute;left:718.9px;top:25.2px" width="26" height="26" viewBox="0 0 32 32"><path d="M1.3 9.500l2.2-4h9.500l2 3.500h15.700v22H1.300z" fill="#1c1c1c"/>
<path d="M2.5 10l1.5-3.500h8.500l2 3.500h14.500v2.500h-26.500z" fill="#f2eea0"/>
<path d="M2.5 11.500h26.500v17.700H2.500z" fill="#e0dc60"/>
<path d="M2.5 11.700h26.5" stroke="#f8f4b0" stroke-width="1"/></svg>
<div class="fl" style="left:691.9px;top:52.8px"><span>programs</span></div>
<svg style="position:absolute;left:773.8px;top:25.2px" width="26" height="26" viewBox="0 0 32 32"><path d="M1.3 9.500l2.2-4h9.500l2 3.500h15.700v22H1.300z" fill="#1c1c1c"/>
<path d="M2.5 10l1.5-3.500h8.500l2 3.500h14.500v2.500h-26.500z" fill="#f2eea0"/>
<path d="M2.5 11.500h26.500v17.700H2.500z" fill="#e0dc60"/>
<path d="M2.5 11.700h26.5" stroke="#f8f4b0" stroke-width="1"/></svg>
<div class="fl" style="left:746.8px;top:52.8px"><span>sounds</span></div>
<svg style="position:absolute;left:828.7px;top:25.2px" width="26" height="26" viewBox="0 0 32 32"><path d="M1.3 9.500l2.2-4h9.500l2 3.500h15.700v22H1.300z" fill="#1c1c1c"/>
<path d="M2.5 10l1.5-3.500h8.500l2 3.500h14.500v2.500h-26.500z" fill="#f2eea0"/>
<path d="M2.5 11.500h26.500v17.700H2.500z" fill="#e0dc60"/>
<path d="M2.5 11.700h26.5" stroke="#f8f4b0" stroke-width="1"/></svg>
<div class="fl" style="left:801.7px;top:52.8px"><span>sys</span></div>
<svg style="position:absolute;left:499.3px;top:65.0px" width="26" height="26" viewBox="0 0 32 32"><path d="M1.3 9.500l2.2-4h9.500l2 3.500h15.700v22H1.300z" fill="#1c1c1c"/>
<path d="M2.5 10l1.5-3.500h8.500l2 3.500h14.500v2.500h-26.500z" fill="#f2eea0"/>
<path d="M2.5 11.500h26.500v17.700H2.500z" fill="#e0dc60"/>
<path d="M2.5 11.700h26.5" stroke="#f8f4b0" stroke-width="1"/></svg>
<div class="fl" style="left:472.3px;top:92.6px"><span>trash</span></div>
<svg style="position:absolute;left:554.2px;top:65.0px" width="26" height="26" viewBox="0 0 32 32"><rect x="5" y="4" width="23" height="26.5" rx="1" fill="#f4f4f4" stroke="#222" stroke-width="1.4"/>
<path d="M7 2v4M9.5 2v4M12 2v4M14.5 2v4M17 2v4M19.5 2v4M22 2v4M24.5 2v4M26.5 2v4" stroke="#222" stroke-width="1.1"/>
<rect x="8" y="8" width="5" height="3" fill="#777"/><path d="M19 8.500h6M21 10.500h4" stroke="#888" stroke-width="1"/>
<path d="M8 13.500h6" stroke="#333" stroke-width="1.4"/>
<rect x="8" y="16" width="17" height="3" fill="#888"/><rect x="8" y="20" width="17" height="3" fill="#888"/>
<rect x="8" y="25" width="5" height="3" fill="#777"/></svg>
<div class="fl" style="left:527.2px;top:92.6px"><span>ILOVEYOU...</span></div>
<svg style="position:absolute;left:609.1px;top:65.0px" width="26" height="26" viewBox="0 0 32 32"><path d="M4 1.500h17l7 7v22H4z" fill="#f4bc28" stroke="#a86c08" stroke-width="1.4"/>
<path d="M21 1.500v7h7z" fill="#fce890" stroke="#a86c08" stroke-width="1"/>
<path d="M8 8h6M8 11h3M10 14h6M10 17h9M10 20h11M8 24h5M8 26.500h5" stroke="#9a7010" stroke-width="1.5"/></svg>
<div class="fl" style="left:582.1px;top:92.6px"><span>apps.js</span></div>
<svg style="position:absolute;left:664.0px;top:65.0px" width="26" height="26" viewBox="0 0 32 32"><rect x="1.5" y="3" width="29" height="26" fill="#e8e8e8" stroke="#444" stroke-width="1.3"/>
<rect x="3" y="4.5" width="26" height="4" fill="url(#gmc)"/><rect x="23" y="5" width="5.5" height="3" fill="#555"/>
<rect x="3" y="9.5" width="26" height="18" fill="#f4f4f4"/>
<circle cx="13" cy="18.5" r="7.5" fill="#b8e020" stroke="#3a4a00" stroke-width="1"/>
<circle cx="10.5" cy="16.5" r="1.1" fill="#111"/><circle cx="15.5" cy="16.5" r="1.1" fill="#111"/>
<path d="M9 20c2 3 6 3 8 0" stroke="#111" stroke-width="1.2" fill="none"/></svg>
<div class="fl" style="left:637.0px;top:92.6px"><span>desktop.html</span></div>
<svg style="position:absolute;left:718.9px;top:65.0px" width="26" height="26" viewBox="0 0 32 32"><path d="M4 1.500h17l7 7v22H4z" fill="#f4bc28" stroke="#a86c08" stroke-width="1.4"/>
<path d="M21 1.500v7h7z" fill="#fce890" stroke="#a86c08" stroke-width="1"/>
<path d="M8 8h6M8 11h3M10 14h6M10 17h9M10 20h11M8 24h5M8 26.500h5" stroke="#9a7010" stroke-width="1.5"/></svg>
<div class="fl" style="left:691.9px;top:92.6px"><span>mimetypes.js</span></div>
<svg style="position:absolute;left:773.8px;top:65.0px" width="26" height="26" viewBox="0 0 32 32"><path d="M4 1.500h17l7 7v22H4z" fill="#f4bc28" stroke="#a86c08" stroke-width="1.4"/>
<path d="M21 1.500v7h7z" fill="#fce890" stroke="#a86c08" stroke-width="1"/>
<path d="M8 8h6M8 11h3M10 14h6M10 17h9M10 20h11M8 24h5M8 26.500h5" stroke="#9a7010" stroke-width="1.5"/></svg>
<div class="fl" style="left:746.8px;top:92.6px"><span>scanner.json</span></div>


<!-- Poney window -->
<div class="win" style="left:405.6px;top:147.4px;width:418.4px;height:348.4px;border:1px solid;border-color:#dcdcdc #222 #222 #dcdcdc;box-shadow:inset 1px 1px 0 #fff,inset -1px -1px 0 #808080,0 0 80px rgba(255,0,255,.56)"></div>
<div class="tb" style="left:407.6px;top:149.2px;width:413.6px;height:13.9px;background:linear-gradient(90deg,#ff00ff,#00ffff)"><div class="t" style="left:16px">PONEY JOCKEY</div>
 <div class="btn" style="left:375.8px;top:1.7px"><svg viewBox="0 0 8.5 8.6"><path d="M1 6.800h6" stroke="#000" stroke-width="1.5"/></svg></div><div class="btn" style="left:388.3px;top:1.7px"><svg viewBox="0 0 8.5 8.6"><path d="M1.3 1.300h5.800v5.800h-5.800z" fill="#e8e8e8" stroke="#000" stroke-width=".8"/><path d="M1 1.600h6.4" stroke="#000" stroke-width="1.5"/></svg></div><div class="btn" style="left:400.8px;top:1.7px"><svg viewBox="0 0 8.5 8.6"><path d="M1.2 1.200l6 6M7.2 1.200l-6 6" stroke="#000" stroke-width="1.1"/></svg></div>
</div>
<svg style="position:absolute;left:409.5px;top:150.3px" width="11.5" height="11.5" viewBox="0 0 32 32"><ellipse cx="17" cy="28.5" rx="9" ry="2.6" fill="#777"/>
<path d="M19 12c4-3 9-2 10 3 1 4-2 8-3 12-2-2-1-6-2-9-1-3-3-4-5-6z" fill="#5a2c9c"/>
<path d="M22 13c3-1 5 1 5 4s-2 5-2 8" stroke="#e040c0" stroke-width="1.4" fill="none"/>
<path d="M10 14h11c2 0 3 2 3 4v9h-3.500v-6h-5v6H12v-7c-2-1-3-3-2-6z" fill="#dcaef4" stroke="#9060c0" stroke-width=".8"/>
<path d="M4 8c1-4 6-5 9-3s3 6 2 9l-4 2c-3 1-6 0-7-2z" fill="#dcaef4" stroke="#9060c0" stroke-width=".8"/>
<path d="M8 1l2 5M3 5c2-3 6-4 9-2 2 1 3 4 3 6-2-3-6-4-9-3z" fill="#5a2c9c"/>
<path d="M9.5 1.500l1.5 4.5" stroke="#f0d0ff" stroke-width="1.4"/>
<ellipse cx="8" cy="10" rx="1.6" ry="2" fill="#402070"/></svg>
<div class="mi" style="left:413.2px;width:42.0px"><span>Invert</span></div>
<div class="mi" style="left:460.0px;width:38.4px"><span>Tada</span></div>
<div class="mi" style="left:502.9px;width:33.7px"><span>Hue</span></div>
<div class="mi" style="left:541.0px;width:33.7px"><span>Blur</span></div>
<div class="mi" style="left:579.6px;width:53.3px"><span>Saturate</span></div>
<div class="mi" style="left:637.3px;width:53.7px"><span>Contrast</span></div>
<div style="position:absolute;left:407.6px;top:179px;width:413.6px;height:315px;background:#efefef"></div>
<div style="position:absolute;left:411.6px;top:182.6px;width:227.4px;height:15.4px;background:#ececec;border-right:2px solid #555"></div>
<div style="position:absolute;left:411.6px;top:197.5px;width:257.8px;height:74.5px;background:#ececec;border-right:2px solid #555;border-bottom:2px solid #444"></div>
<div class="k" style="left:411.7px;top:183.5px;width:16.4px;height:14px"><span>f1</span></div>
<div class="k" style="left:428.6px;top:183.5px;width:17.8px;height:14px"><span>f2</span></div>
<div class="k" style="left:446.9px;top:183.5px;width:17.6px;height:14px"><span>f3</span></div>
<div class="k" style="left:465.1px;top:183.5px;width:18.4px;height:14px"><span>f4</span></div>
<div class="k" style="left:484.1px;top:183.5px;width:17.5px;height:14px"><span>f5</span></div>
<div class="k" style="left:502.2px;top:183.5px;width:17.9px;height:14px"><span>f6</span></div>
<div class="k" style="left:520.7px;top:183.5px;width:17.6px;height:14px"><span>f7</span></div>
<div class="k" style="left:538.8px;top:183.5px;width:17.9px;height:14px"><span>f8</span></div>
<div class="k" style="left:557.2px;top:183.5px;width:17.6px;height:14px"><span>f9</span></div>
<div class="k" style="left:575.3px;top:183.5px;width:20.6px;height:14px"><span>f10</span></div>
<div class="k" style="left:596.4px;top:183.5px;width:19.2px;height:14px"><span>f11</span></div>
<div class="k" style="left:616.2px;top:183.5px;width:20.5px;height:14px"><span>f12</span></div>
<div class="k" style="left:411.4px;top:198.4px;width:14.1px;height:14px"><span>1</span></div>
<div class="k" style="left:426.0px;top:198.4px;width:14.0px;height:14px"><span>2</span></div>
<div class="k" style="left:440.6px;top:198.4px;width:14.1px;height:14px"><span>3</span></div>
<div class="k" style="left:455.2px;top:198.4px;width:14.0px;height:14px"><span>4</span></div>
<div class="k" style="left:469.8px;top:198.4px;width:14.1px;height:14px"><span>5</span></div>
<div class="k" style="left:484.4px;top:198.4px;width:14.1px;height:14px"><span>6</span></div>
<div class="k" style="left:499.0px;top:198.4px;width:14.1px;height:14px"><span>7</span></div>
<div class="k" style="left:513.6px;top:198.4px;width:14.0px;height:14px"><span>8</span></div>
<div class="k" style="left:528.2px;top:198.4px;width:14.1px;height:14px"><span>9</span></div>
<div class="k" style="left:542.8px;top:198.4px;width:13.2px;height:14px"><span>0</span></div>
<div class="k" style="left:556.6px;top:198.4px;width:110.7px;height:14px"><span>backspace</span></div>
<div class="k" style="left:411.4px;top:213.3px;width:84.5px;height:14px"><span>tab</span></div>
<div class="k" style="left:496.5px;top:213.3px;width:14.4px;height:14px"><span>a</span></div>
<div class="k" style="left:511.4px;top:213.3px;width:12.8px;height:14px"><span>z</span></div>
<div class="k" style="left:524.8px;top:213.3px;width:14.5px;height:14px"><span>e</span></div>
<div class="k" style="left:539.8px;top:213.3px;width:13.5px;height:14px"><span>r</span></div>
<div class="k" style="left:553.8px;top:213.3px;width:13.5px;height:14px"><span>t</span></div>
<div class="k" style="left:567.8px;top:213.3px;width:14.1px;height:14px"><span>y</span></div>
<div class="k" style="left:582.4px;top:213.3px;width:14.9px;height:14px"><span>u</span></div>
<div class="k" style="left:597.8px;top:213.3px;width:10.2px;height:14px"><span>i</span></div>
<div class="k" style="left:608.6px;top:213.3px;width:14.5px;height:14px"><span>o</span></div>
<div class="k" style="left:623.6px;top:213.3px;width:14.6px;height:14px"><span>p</span></div>
<div class="k" style="left:638.7px;top:213.3px;width:13.6px;height:14px"><span>^</span></div>
<div class="k" style="left:652.8px;top:213.3px;width:14.5px;height:14px"><span>$</span></div>
<div class="k" style="left:411.4px;top:228.0px;width:42.6px;height:14px"><span>caps</span></div>
<div class="k" style="left:454.6px;top:228.0px;width:14.1px;height:14px"><span>q</span></div>
<div class="k" style="left:469.3px;top:228.0px;width:14.1px;height:14px"><span>s</span></div>
<div class="k" style="left:484.0px;top:228.0px;width:13.9px;height:14px"><span>d</span></div>
<div class="k" style="left:498.4px;top:228.0px;width:14.1px;height:14px"><span>f</span></div>
<div class="k" style="left:513.0px;top:228.0px;width:13.9px;height:14px"><span>g</span></div>
<div class="k" style="left:527.4px;top:228.0px;width:14.0px;height:14px"><span>h</span></div>
<div class="k" style="left:541.9px;top:228.0px;width:12.0px;height:14px"><span>j</span></div>
<div class="k" style="left:554.4px;top:228.0px;width:13.5px;height:14px"><span>k</span></div>
<div class="k" style="left:568.4px;top:228.0px;width:11.0px;height:14px"><span>l</span></div>
<div class="k" style="left:579.9px;top:228.0px;width:15.5px;height:14px"><span>m</span></div>
<div class="k" style="left:595.9px;top:228.0px;width:14.0px;height:14px"><span>ù</span></div>
<div class="k" style="left:610.4px;top:228.0px;width:14.1px;height:14px"><span>*</span></div>
<div class="k" style="left:625.1px;top:228.0px;width:42.2px;height:14px"><span>enter</span></div>
<div class="k" style="left:411.4px;top:242.7px;width:103.6px;height:14px"><span>shift</span></div>
<div class="k" style="left:515.5px;top:242.7px;width:12.5px;height:14px"><span>&lt;</span></div>
<div class="k" style="left:528.5px;top:242.7px;width:16.8px;height:14px"><span>w</span></div>
<div class="k" style="left:545.8px;top:242.7px;width:14.4px;height:14px"><span>x</span></div>
<div class="k" style="left:560.7px;top:242.7px;width:14.4px;height:14px"><span>c</span></div>
<div class="k" style="left:575.6px;top:242.7px;width:14.1px;height:14px"><span>v</span></div>
<div class="k" style="left:590.2px;top:242.7px;width:14.1px;height:14px"><span>b</span></div>
<div class="k" style="left:604.8px;top:242.7px;width:14.0px;height:14px"><span>n</span></div>
<div class="k" style="left:619.3px;top:242.7px;width:12.4px;height:14px"><span>,</span></div>
<div class="k" style="left:632.2px;top:242.7px;width:11.5px;height:14px"><span>;</span></div>
<div class="k" style="left:644.2px;top:242.7px;width:11.1px;height:14px"><span>:</span></div>
<div class="k" style="left:655.8px;top:242.7px;width:11.5px;height:14px"><span>!</span></div>
<div class="k" style="left:411.4px;top:257.4px;width:23.3px;height:14px"><span>ctrl</span></div>
<div class="k" style="left:435.3px;top:257.4px;width:19.1px;height:14px"><span>alt</span></div>
<div class="k" style="left:454.9px;top:257.4px;width:212.3px;height:14px"><span>space</span></div>
<div style="position:absolute;left:412px;top:285.6px;width:3.6px;height:1px;background:#b873b8"></div>
<div style="position:absolute;left:411.4px;top:295.4px;width:374px;height:15px;background:#e8e8e8;border:1px solid;border-color:#8a8a8a #fff #fff #8a8a8a;font-size:9px;line-height:15px;color:#a0a0a0"><span style="display:inline-block;margin-left:2px;transform:scaleX(.92);transform-origin:0 50%">sound</span></div>
<div class="k" style="left:787px;top:296px;width:30.6px;height:14.6px;line-height:13px;border-color:#fff #444 #444 #fff;background:#c6c6c6"><span>Import</span></div>

<div id="bar">
 <div class="tk" style="left:1.2px;width:46.2px"><svg style="position:absolute;left:3.5px;top:2.3px" width="12" height="12" viewBox="0 0 32 32"><path d="M2 6l8-3v24l-8 3z" fill="#222"/>
<path d="M3 8l6-2v5l-6 2z" fill="#f020e0"/><path d="M3 14l6-2v5l-6 2z" fill="#20d0f0"/><path d="M3 20l6-2v5l-6 2z" fill="#f0e020"/>
<path d="M12 12c0-6 4-10 9-10s9 4 9 10v18H12z" fill="#c8e810" stroke="#111" stroke-width="1.5"/>
<rect x="16" y="11" width="3" height="4" fill="#111"/><rect x="23" y="11" width="3" height="4" fill="#111"/>
<path d="M16 21h10" stroke="#111" stroke-width="1.5"/></svg><i style="left:20.5px">Start</i></div>
 <div class="tk" style="left:49.7px;width:73.4px"><i style="left:8px">c/</i></div>
 <div class="tk on" style="left:124.8px;width:74px"><svg style="position:absolute;left:3.0px;top:1.6px" width="12" height="12" viewBox="0 0 32 32"><ellipse cx="17" cy="28.5" rx="9" ry="2.6" fill="#777"/>
<path d="M19 12c4-3 9-2 10 3 1 4-2 8-3 12-2-2-1-6-2-9-1-3-3-4-5-6z" fill="#5a2c9c"/>
<path d="M22 13c3-1 5 1 5 4s-2 5-2 8" stroke="#e040c0" stroke-width="1.4" fill="none"/>
<path d="M10 14h11c2 0 3 2 3 4v9h-3.500v-6h-5v6H12v-7c-2-1-3-3-2-6z" fill="#dcaef4" stroke="#9060c0" stroke-width=".8"/>
<path d="M4 8c1-4 6-5 9-3s3 6 2 9l-4 2c-3 1-6 0-7-2z" fill="#dcaef4" stroke="#9060c0" stroke-width=".8"/>
<path d="M8 1l2 5M3 5c2-3 6-4 9-2 2 1 3 4 3 6-2-3-6-4-9-3z" fill="#5a2c9c"/>
<path d="M9.5 1.500l1.5 4.5" stroke="#f0d0ff" stroke-width="1.4"/>
<ellipse cx="8" cy="10" rx="1.6" ry="2" fill="#402070"/></svg><i style="left:19.5px">poney jockey</i></div>
 <div class="tk" style="left:965.6px;width:32.8px;border-color:#999 #eee #eee #999;box-shadow:none"><i style="left:6.5px;transform:scaleX(.84)">17:03</i></div>
</div>
</body></html>
